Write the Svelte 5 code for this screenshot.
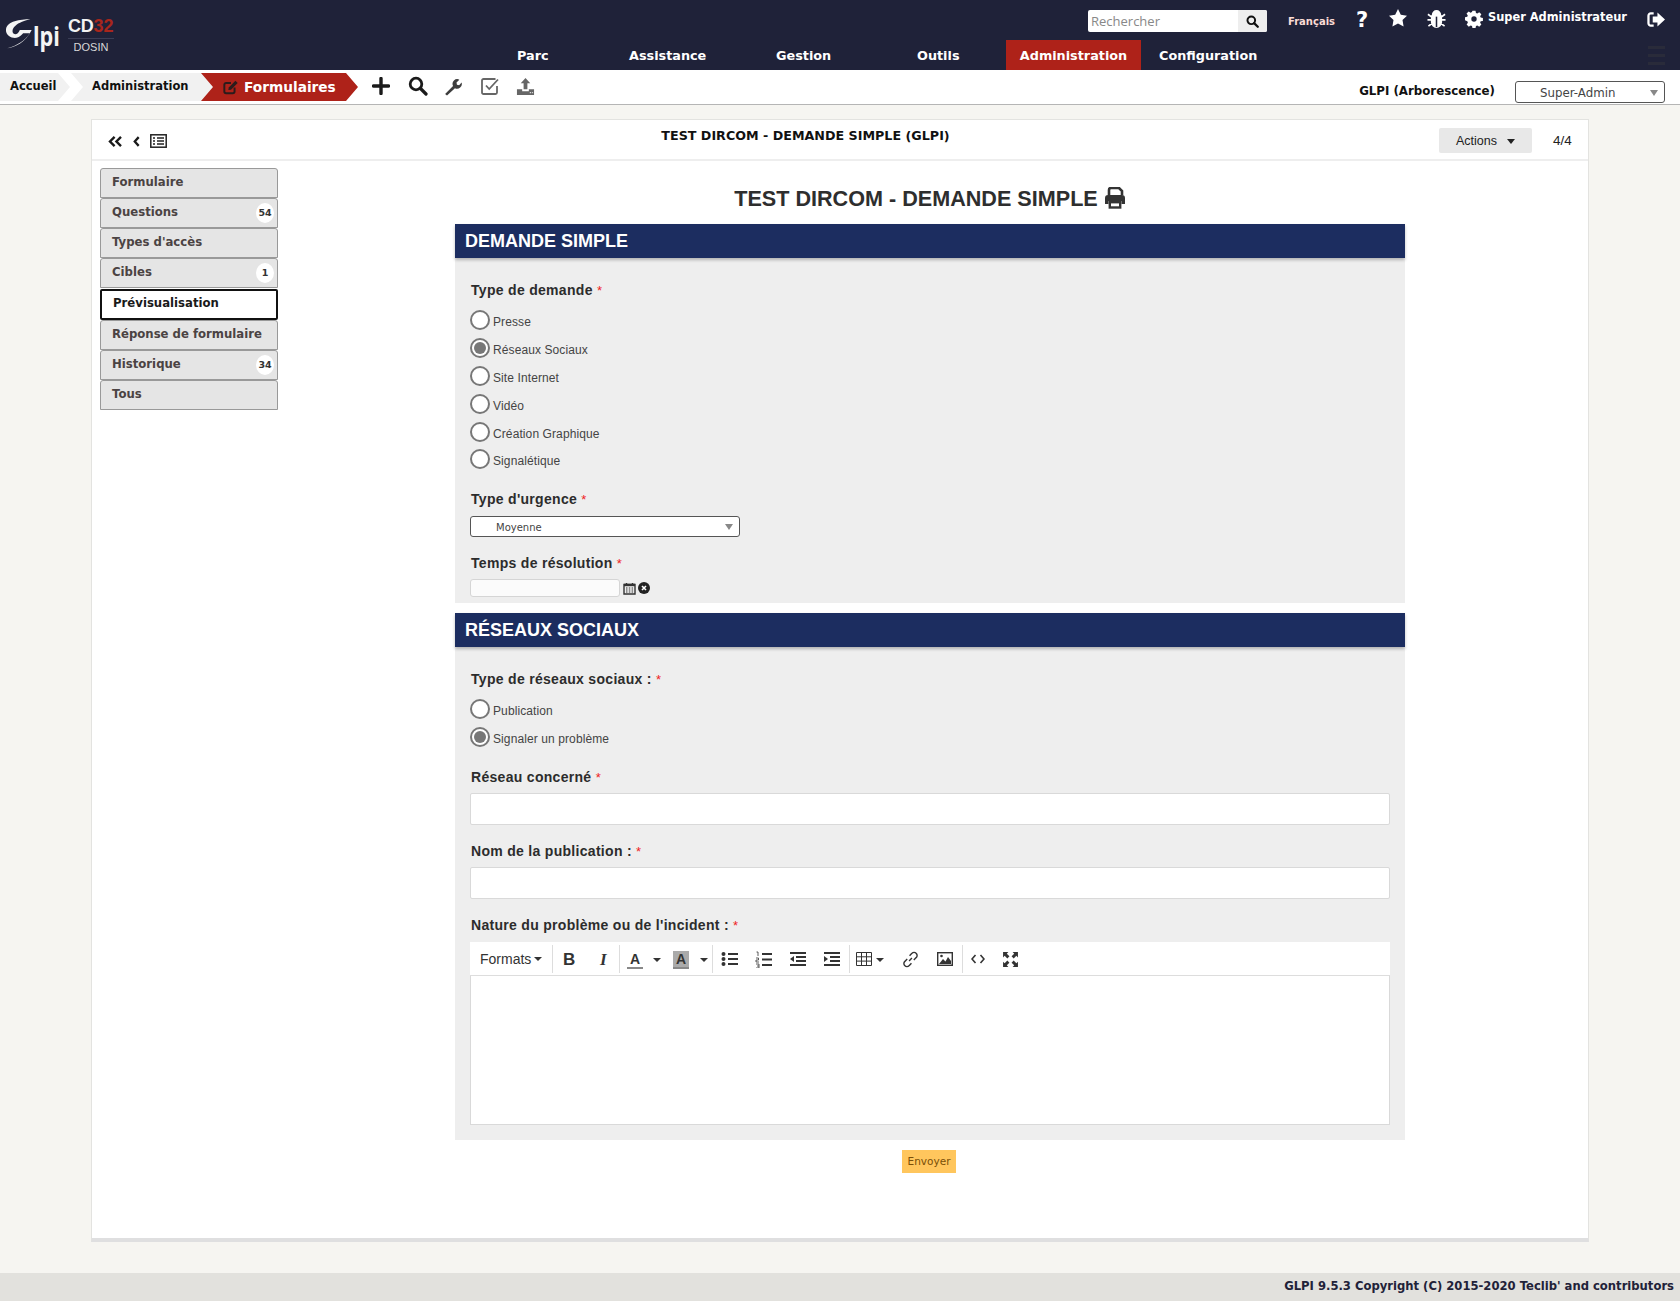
<script>
  const nav = [
    { label: 'Parc', w: 135 },
    { label: 'Assistance', w: 135 },
    { label: 'Gestion', w: 135 },
    { label: 'Outils', w: 135 },
    { label: 'Administration', w: 135, active: true },
    { label: 'Configuration', w: 135 }
  ];
  const tabs = [
    { label: 'Formulaire' },
    { label: 'Questions', badge: 54 },
    { label: "Types d'accès" },
    { label: 'Cibles', badge: 1 },
    { label: 'Prévisualisation', active: true },
    { label: 'Réponse de formulaire' },
    { label: 'Historique', badge: 34 },
    { label: 'Tous' }
  ];
  const demandes = [
    ['Presse', false], ['Réseaux Sociaux', true], ['Site Internet', false],
    ['Vidéo', false], ['Création Graphique', false], ['Signalétique', false]
  ];
  const reseaux = [['Publication', false], ['Signaler un problème', true]];
</script>

<div class="page">
  <header class="top">
    <div class="logo">
      <svg class="swoosh" viewBox="15 35 85 100" width="28" height="33">
        <path d="M92 42C60 42 22 48 18 72c-2 20 18 28 32 26 10-2 16-10 20-14h20C78 105 50 122 22 130c23-4 56-18 74-56H60c-4 10-12 16-18 12-6-4-6-16 4-24 10-10 30-16 46-20z" fill="#f4f4f4"/>
      </svg>
      <span class="lpi">lpi</span>
      <div class="cd">
        <div class="cd32">CD<b>32</b></div>
        <div class="dosin">DOSIN</div>
      </div>
    </div>
    <div class="top-main">
      <div class="top-right">
        <div class="search">
          <span class="search-input">Rechercher</span>
          <span class="search-btn">
            <svg viewBox="0 0 16 16" width="13" height="13"><circle cx="6.500" cy="6.500" r="4.700" fill="none" stroke="#111" stroke-width="2.400"/><path d="M10 10l4.500 4.500" stroke="#111" stroke-width="2.800" stroke-linecap="round"/></svg>
          </span>
        </div>
        <span class="lang">Français</span>
        <span class="qm">?</span>
        <svg class="ti star" viewBox="0 0 20 20" width="20" height="20"><path d="M10 1l2.800 5.800 6.200.9-4.500 4.400 1.100 6.400L10 15.500l-5.600 3 1.100-6.400L1 7.700l6.200-.9z" fill="#fff"/></svg>
        <svg class="ti bug" viewBox="0 0 20 20" width="19" height="19"><path d="M6 5a4 4 0 0 1 8 0zM5 6.500h10V13a5 5 0 0 1-10 0zM1 4.500l4 3M19 4.500l-4 3M.5 10.500h4.500M19.500 10.500H15M1.500 17l4-3M18.500 17l-4-3" fill="#fff" stroke="#fff" stroke-width="1.800"/><path d="M10 7v11" stroke="#1f2239" stroke-width="1.600"/></svg>
        <svg class="ti gear" viewBox="0 0 20 20" width="18" height="18"><path d="M8.300 1h3.400l.5 2.500 1.500.6 2.100-1.400 2.400 2.400-1.400 2.100.6 1.500 2.500.5v3.400l-2.500.5-.6 1.500 1.400 2.100-2.400 2.400-2.100-1.400-1.500.6-.5 2.500H8.300l-.5-2.500-1.500-.6-2.100 1.400-2.400-2.400 1.400-2.100-.6-1.500L0 11.700V8.300l2.500-.5.600-1.500L1.700 4.200l2.400-2.400 2.100 1.400 1.500-.6z" transform="translate(0 -.2) scale(1 .98)" fill="#fff"/><circle cx="10" cy="10" r="3" fill="#1f2239"/></svg>
        <span class="user">Super Administrateur</span>
        <svg class="ti out" viewBox="0 0 20 18" width="19" height="17"><path d="M7 2.500H4A2.500 2.500 0 0 0 1.500 5v8A2.500 2.500 0 0 0 4 15.500h3" fill="none" stroke="#fff" stroke-width="2.400"/><path d="M11 1.500l8 7.500-8 7.500v-4.200H6V5.700h5z" fill="#fff"/></svg>
      </div>
      <nav class="nav">
        {#each nav as n}
          <span class="nav-item" class:active={n.active}>{n.label}</span>
        {/each}
      </nav>
      <div class="burger"><i></i><i></i><i></i></div>
    </div>
  </header>

  <div class="crumbs">
    <div class="crumb first">Accueil</div>
    <div class="crumb second">Administration</div>
    <div class="crumb current">
      <svg viewBox="0 0 18 18" width="16" height="16"><path d="M13 9.500V14a2 2 0 0 1-2 2H3.500a2 2 0 0 1-2-2V6.500a2 2 0 0 1 2-2H9" fill="none" stroke="#2b1c1c" stroke-width="2.200"/><path d="M6.500 9.500L14 2l2.500 2.500L9 12l-3 .5z" fill="#2b1c1c"/></svg>
      <span>Formulaires</span>
    </div>
    <div class="tools">
      <svg viewBox="0 0 18 18" width="18" height="18"><path d="M9 1.500v15M1.500 9h15" stroke="#1a1a1a" stroke-width="3.400" stroke-linecap="round"/></svg>
      <svg viewBox="0 0 20 20" width="20" height="20"><circle cx="8" cy="8" r="5.800" fill="none" stroke="#1a1a1a" stroke-width="2.800"/><path d="M12.500 12.500l5.500 5.500" stroke="#1a1a1a" stroke-width="3.200" stroke-linecap="round"/></svg>
      <svg viewBox="0 0 18 18" width="19" height="19"><path d="M2 16l7.500-7.500a4.500 4.500 0 0 1 6-6L12.800 5.300l.4 2.100 2.100.4 2.300-2.600a4.500 4.500 0 0 1-6.300 5.400L3.800 17.500z" fill="#3d3d3d"/></svg>
      <svg viewBox="0 0 20 20" width="20" height="20"><path d="M17 10v6.500a1.500 1.500 0 0 1-1.500 1.500h-12A1.500 1.500 0 0 1 2 16.500v-12A1.500 1.500 0 0 1 3.500 3h12" fill="none" stroke="#666" stroke-width="1.800"/><path d="M6 9.500l3.200 3.500L18 3.500" fill="none" stroke="#666" stroke-width="1.800"/></svg>
      <svg viewBox="0 0 20 20" width="19" height="19"><path d="M10 1l5 5.500h-3V13H8V6.500H5zM1 13h5.500v2h7v-2H19v6H1z" fill="#666"/><path d="M14.500 16.500h1.500M17 16.500h1" stroke="#fff" stroke-width="1"/></svg>
    </div>
    <div class="profile">
      <span class="ent">GLPI (Arborescence)</span>
      <div class="pselect">Super-Admin<i class="caret"></i></div>
    </div>
  </div>

  <main class="box-wrap">
    <section class="box">
      <div class="box-head">
        <div class="pager-left">
          <svg viewBox="0 0 16 12" width="15" height="11"><path d="M7 1L2 6l5 5M14 1L9 6l5 5" fill="none" stroke="#1a1a1a" stroke-width="2.600"/></svg>
          <svg viewBox="0 0 8 12" width="7" height="11"><path d="M6.500 1L2 6l4.500 5" fill="none" stroke="#1a1a1a" stroke-width="2.600"/></svg>
          <svg viewBox="0 0 17 14" width="17" height="14"><rect x=".8" y=".8" width="15.400" height="12.400" fill="#fff" stroke="#222" stroke-width="1.500"/><path d="M3 4h2M7 4h7M3 7h2M7 7h7M3 10h2M7 10h7" stroke="#222" stroke-width="1.500"/></svg>
        </div>
        <div class="box-title">TEST DIRCOM - DEMANDE SIMPLE (GLPI)</div>
        <div class="actions">Actions<i></i></div>
        <div class="count">4/4</div>
      </div>
      <div class="box-body">
        <ul class="tabs">
          {#each tabs as t}
            <li class:active={t.active}>
              {t.label}
              {#if t.badge}<span class="badge">{t.badge}</span>{/if}
            </li>
          {/each}
        </ul>
        <div class="form">
          <h1>TEST DIRCOM - DEMANDE SIMPLE
            <svg viewBox="0 0 22 22" width="22" height="22"><path d="M5 8V3a2 2 0 0 1 2-2h8l3 3v4" fill="none" stroke="#333" stroke-width="2.600"/><path d="M1 11a3 3 0 0 1 3-3h14a3 3 0 0 1 3 3v6h-3.500v-3h-13v3H1z" fill="#333"/><rect x="5.800" y="15.200" width="10.400" height="5.300" fill="none" stroke="#333" stroke-width="2.400"/></svg>
          </h1>

          <h2 class="section">DEMANDE SIMPLE</h2>
          <div class="sec-body one">
            <div class="label first-label">Type de demande <em>*</em></div>
            <div class="radios">
              {#each demandes as [txt, on]}
                <div class="radio"><span class="dot" class:on={on}></span>{txt}</div>
              {/each}
            </div>
            <div class="label urg">Type d'urgence <em>*</em></div>
            <div class="select">Moyenne<i class="caret"></i></div>
            <div class="label tps">Temps de résolution <em>*</em></div>
            <div class="date">
              <span class="date-input"></span>
              <svg viewBox="0 0 13 13" width="13" height="13"><path d="M1 2.500h11V12H1zM3.500 1v2.500M9.500 1v2.500" fill="none" stroke="#333" stroke-width="1.400"/><path d="M1 1.800h11v2.400H1z" fill="#333"/><path d="M3 6h1.500M5.800 6h1.500M8.600 6h1.500M3 8h1.500M5.800 8h1.500M8.600 8h1.500M3 10h1.500M5.800 10h1.500M8.600 10h1.500" stroke="#333"/></svg>
              <svg viewBox="0 0 12 12" width="12" height="12"><circle cx="6" cy="6" r="6" fill="#222"/><path d="M4 4l4 4M8 4l-4 4" stroke="#fff" stroke-width="1.600"/></svg>
            </div>
          </div>

          <h2 class="section second-sec">RÉSEAUX SOCIAUX</h2>
          <div class="sec-body two">
            <div class="label first-label">Type de réseaux sociaux : <em>*</em></div>
            <div class="radios">
              {#each reseaux as [txt, on]}
                <div class="radio"><span class="dot" class:on={on}></span>{txt}</div>
              {/each}
            </div>
            <div class="label l-res">Réseau concerné <em>*</em></div>
            <div class="text-input"></div>
            <div class="label l-nom">Nom de la publication : <em>*</em></div>
            <div class="text-input"></div>
            <div class="label l-nom">Nature du problème ou de l'incident : <em>*</em></div>
            <div class="editor">
              <div class="tb">
                <span class="t-formats">Formats<i class="mini"></i></span>
                <span class="sep s1"></span>
                <span class="t-b">B</span>
                <span class="t-i">I</span>
                <span class="sep s2"></span>
                <span class="t-a">A</span><i class="mini m1"></i>
                <span class="t-a hl">A</span><i class="mini m2"></i>
                <span class="sep s3"></span>
                <svg class="ic ic1" viewBox="0 0 18 16" width="18" height="16"><circle cx="2.500" cy="3" r="2" fill="#333"/><circle cx="2.500" cy="8" r="2" fill="#333"/><circle cx="2.500" cy="13" r="2" fill="#333"/><path d="M7 3h10M7 8h10M7 13h10" stroke="#333" stroke-width="2"/></svg>
                <svg class="ic ic2" viewBox="0 0 18 17" width="18" height="17"><path d="M7 3h10M7 8.500h10M7 14h10" stroke="#333" stroke-width="2"/><path d="M1.500 1h1.500v4M1 7h2.500v2H1v2h3M1 13h3v4H1M2 15h2" fill="none" stroke="#333" stroke-width=".8"/></svg>
                <svg class="ic ic3" viewBox="0 0 18 16" width="18" height="16"><path d="M1 2h16M7 6h10M7 10h10M1 14h16" stroke="#333" stroke-width="2"/><path d="M5 5v6L1 8z" fill="#333"/></svg>
                <svg class="ic ic4" viewBox="0 0 18 16" width="18" height="16"><path d="M1 2h16M7 6h10M7 10h10M1 14h16" stroke="#333" stroke-width="2"/><path d="M1 5v6l4-3z" fill="#333"/></svg>
                <span class="sep s4"></span>
                <svg class="ic ic5" viewBox="0 0 16 14" width="16" height="14"><path d="M.5.500h15v13H.5zM.5 4.800h15M.5 9.100h15M5.500.500v13M10.500.500v13" fill="none" stroke="#333"/></svg><i class="mini m3"></i>
                <svg class="ic ic6" viewBox="0 0 18 18" width="17" height="17"><path d="M7.500 10.500l3-3M8 5l2.500-2.500a3 3 0 0 1 4.500 0 3 3 0 0 1 0 4.500L12.500 9.500M10 13l-2.500 2.500a3 3 0 0 1-4.500 0 3 3 0 0 1 0-4.500L5.500 8.500" fill="none" stroke="#333" stroke-width="1.500"/></svg>
                <svg class="ic ic7" viewBox="0 0 16 14" width="16" height="14"><rect x=".7" y=".7" width="14.600" height="12.600" fill="none" stroke="#333" stroke-width="1.400"/><path d="M2 12l4-5 2.500 2.500L11 5l3 4v3z" fill="#333"/><circle cx="4.500" cy="4" r="1.300" fill="#333"/></svg>
                <span class="sep s5"></span>
                <svg class="ic ic8" viewBox="0 0 14 10" width="14" height="10"><path d="M4.500 1L1 5l3.500 4M9.500 1L13 5l-3.500 4" fill="none" stroke="#333" stroke-width="1.600"/></svg>
                <svg class="ic ic9" viewBox="0 0 16 16" width="17" height="17"><path d="M1 1h5L4.500 2.500 7 5 5 7 2.500 4.500 1 6zM15 1v5l-1.500-1.500L11 7 9 5l2.500-2.500L10 1zM1 15v-5l1.500 1.500L5 9l2 2-2.500 2.500L6 15zM15 15h-5l1.500-1.500L9 11l2-2 2.500 2.500L15 10z" fill="#333"/></svg>
              </div>
              <div class="area"></div>
            </div>
          </div>
          <div class="send"><span>Envoyer</span></div>
        </div>
      </div>
    </section>
  </main>

  <footer class="foot">GLPI 9.5.3 Copyright (C) 2015-2020 Teclib' and contributors</footer>
</div>

<style>
  :global(body) { margin: 0; background: #f6f5f1; }
  * { box-sizing: border-box; }
  .page { width: 1680px; height: 1301px; font-family: "DejaVu Sans", Verdana, sans-serif; display: flex; flex-direction: column; color: #111; overflow: hidden; }

  .top { height: 70px; background: #1f2239; display: flex; position: relative; }
  .logo { width: 470px; display: flex; align-items: flex-start; padding: 13px 0 0 5px; position: relative; }
  .swoosh { flex: none; margin-top: 4px; }
  .lpi { font: 700 27px/1 "Open Sans", sans-serif; color: #f4f4f4; margin: 9px 0 0 0; transform: scaleX(.8); transform-origin: left; width: 27px; }
  .cd { margin: 2px 0 0 8px; width: 46px; text-align: center; }
  .cd32 { font: 700 18px/22px "Liberation Sans", sans-serif; color: #f2f2f2; border-bottom: 1px solid #3a3d55; padding-bottom: 1px; text-align: left; letter-spacing: -.2px; }
  .cd32 b { color: #a9261c; }
  .dosin { font: 400 11px/14px "Liberation Sans", sans-serif; color: #d8d8d8; margin-top: 1px; }

  .top-main { flex: 1; position: relative; }
  .top-right { position: absolute; top: 10px; right: 14px; display: flex; align-items: flex-start; }
  .search { width: 179px; height: 22px; background: #fff; border-radius: 2px; display: flex; }
  .search-input { flex: 1; font: 13px/22px "Open Sans", sans-serif; color: #888; padding-left: 3px; }
  .search-btn { width: 29px; background: #eee; display: flex; align-items: center; justify-content: center; border-radius: 0 2px 2px 0; }
  .lang { font-size: 10px; font-weight: 700; color: #fbdcd5; margin: 6px 0 0 21px; width: 68px; }
  .qm { font: 700 21px/20px "DejaVu Sans", sans-serif; color: #fff; width: 21px; }
  .ti { flex: none; }
  .star { margin-left: 11px; margin-top: -2px; }
  .bug { margin-left: 19px; }
  .gear { margin-left: 19px; }
  .user { font-size: 11.400px; font-weight: 700; color: #fff; margin: 0 0 0 5px; line-height: 14px; width: 148px; white-space: nowrap; }
  .out { margin-left: 11px; margin-top: 1px; }

  .nav { position: absolute; left: 0; top: 40px; height: 30px; display: flex; }
  .nav-item { font-size: 12.800px; font-weight: 700; color: #fff; line-height: 31px; white-space: nowrap; position: absolute; top: 0; }
  .nav-item:nth-child(1) { left: 47px; }
  .nav-item:nth-child(2) { left: 159px; }
  .nav-item:nth-child(3) { left: 306px; }
  .nav-item:nth-child(4) { left: 447px; }
  .nav-item:nth-child(5) { left: 536px; width: 135px; background: #ae2219; text-align: center; height: 30px; }
  .nav-item:nth-child(6) { left: 689px; }
  .burger { position: absolute; right: 15px; top: 46px; display: flex; flex-direction: column; gap: 5px; }
  .burger i { display: block; width: 17px; height: 3px; background: #292b3a; }

  .crumbs { height: 35px; background: #fff; border-bottom: 1px solid #b5b5b5; position: relative; display: flex; flex: none; }
  .crumb { position: absolute; top: 3px; height: 28px; font-size: 11.500px; font-weight: 700; line-height: 27px; white-space: nowrap; }
  .first { left: 0; background: #f1f1f1; padding-left: 10px; clip-path: polygon(0 0, 58px 0, 70px 50%, 58px 100%, 0 100%); width: 70px; }
  .second { left: 71px; width: 143px; background: #f1f1f1; padding-left: 21px; clip-path: polygon(0 0, 131px 0, 143px 50%, 131px 100%, 0 100%, 12px 50%); }
  .current { left: 201px; width: 157px; background: #ae2219; color: #fff; padding-left: 22px; font-size: 13.700px; display: flex; align-items: center; gap: 5px; clip-path: polygon(0 0, 145px 0, 157px 50%, 145px 100%, 0 100%, 12px 50%); }
  .tools { position: absolute; left: 372px; top: 6px; display: flex; align-items: center; }
  .tools svg:nth-child(2) { margin-left: 18px; }
  .tools svg:nth-child(3) { margin-left: 15px; }
  .tools svg:nth-child(4) { margin-left: 18px; }
  .tools svg:nth-child(5) { margin-left: 16px; }
  .profile { position: absolute; right: 15px; top: 11px; display: flex; }
  .ent { font-size: 11.800px; font-weight: 700; line-height: 17px; margin-right: 20px; margin-top: 2px; }
  .pselect { width: 150px; height: 22px; border: 1px solid #555; border-radius: 3px; background: #fff; font-size: 11.800px; line-height: 22px; color: #444; padding-left: 24px; position: relative; }
  .caret { position: absolute; right: 6px; top: 8px; width: 0; height: 0; border: 4px solid transparent; border-top: 6px solid #888; border-bottom: 0; }

  .box-wrap { flex: 1; padding: 14px 91px 0 91px; min-height: 0; }
  .box { width: 1498px; height: 1123px; background: #fff; border: 1px solid #e3e3e0; border-bottom: 4px solid #dfdfe0; display: flex; flex-direction: column; }
  .box-head { height: 41px; border-bottom: 2px solid #eee; position: relative; flex: none; }
  .pager-left { position: absolute; left: 16px; top: 14px; display: flex; align-items: center; gap: 10px; }
  .box-title { position: absolute; left: 0; width: 1427px; text-align: center; top: 8px; font-size: 12.700px; font-weight: 700; line-height: 16px; }
  .actions { position: absolute; left: 1347px; top: 8px; width: 93px; height: 25px; background: #e8e8e8; border-radius: 2px; font: 12.500px/26px "Liberation Sans", sans-serif; color: #222; padding-left: 17px; }
  .actions i { position: absolute; right: 17px; top: 11px; border: 4px solid transparent; border-top: 5px solid #222; border-bottom: 0; }
  .count { position: absolute; left: 1461px; top: 13px; font: 13.500px/15px "Liberation Sans", sans-serif; color: #222; }

  .box-body { display: flex; flex: 1; padding: 7px 0 0 8px; position: relative; }
  .tabs { list-style: none; margin: 0; padding: 0; width: 178px; flex: none; }
  .tabs li { height: 30px; background: #e5e5e5; border: 1px solid #999; border-radius: 3px 3px 0 0; font-size: 11.700px; font-weight: 700; color: #4b4343; line-height: 26px; padding-left: 11px; position: relative; }
  .tabs li.active { background: #fff; border: 2px solid #111; border-radius: 2px; height: 31px; color: #1a1a1a; line-height: 25px; padding-left: 11px; margin: 1px 0 0; }
  .badge { position: absolute; right: 3px; top: 4px; width: 18px; height: 20px; background: #fff; border-radius: 50%; font-size: 9.500px; line-height: 20px; text-align: center; color: #333; }

  .form { position: absolute; left: 363px; top: 0; width: 950px; }
  h1 { font: 700 21.600px/30px "Liberation Sans", sans-serif; color: #2e2e2e; margin: 23px 0 0; height: 40px; text-align: center; }
  h1 svg { vertical-align: -3px; margin-left: 0; }
  .section { margin: 0; height: 34px; background: #1c2d60; color: #fff; font: 700 18px/34px "Liberation Sans", sans-serif; padding-left: 10px; box-shadow: 0 2px 3px rgba(0,0,0,.25); position: relative; }
  .second-sec { margin-top: 10px; }
  .sec-body { background: #eee; padding: 0 15px 0 15px; }
  .one { height: 345px; }
  .two { height: 493px; }
  .label { font: 700 14px/18px "Liberation Sans", sans-serif; letter-spacing: .3px; color: #2c2c2c; padding-left: 1px; }
  .label em { font-style: normal; color: #e22; font-weight: 400; font-size: 13px; }
  .first-label { padding-top: 23px; box-sizing: content-box; height: 18px; }
  .radios { margin-top: 11px; display: flex; flex-direction: column; gap: 7.900px; }
  .radio { display: flex; align-items: flex-start; height: 20px; font: 12px/24px "Liberation Sans", sans-serif; color: #444; letter-spacing: .1px; }
  .dot { width: 20px; height: 20px; border: 2px solid #777; border-radius: 50%; background: #fff; margin-right: 3px; position: relative; flex: none; }
  .dot.on::after { content: ""; position: absolute; inset: 2px; background: #777; border-radius: 50%; }
  .urg { margin-top: 21px; }
  .select { margin-top: 7px; width: 270px; height: 21px; border: 1px solid #555; border-radius: 3px; background: #fff; font-size: 10px; line-height: 22px; color: #444; padding-left: 25px; position: relative; }
  .select .caret { right: 6px; top: 7px; border-width: 4px; border-top-width: 6px; }
  .tps { margin-top: 17px; }
  .date { margin-top: 6px; display: flex; align-items: center; gap: 2px; }
  .date-input { width: 150px; height: 18px; background: #fbfbfb; border: 1px solid #d5d5d5; border-radius: 3px; margin-right: 1px; }
  .l-res { margin-top: 21px; }
  .text-input { margin-top: 6px; width: 920px; height: 32px; background: #fff; border: 1px solid #d9d9d9; border-radius: 2px; }
  .l-nom { margin-top: 17px; }
  .editor { margin-top: 7px; width: 920px; }
  .tb { height: 34px; background: #fff; position: relative; border-bottom: 1px solid #ddd; font-family: "Liberation Sans", sans-serif; color: #333; }
  .tb > * { position: absolute; }
  .t-formats { left: 10px; top: 9px; font-size: 14px; line-height: 16px; }
  .mini { width: 0; height: 0; border: 4px solid transparent; border-top: 4px solid #333; border-bottom: 0; }
  .t-formats .mini { display: inline-block; margin-left: 3px; vertical-align: 3px; }
  .sep { top: 3px; width: 1px; height: 28px; background: #ddd; }
  .s1 { left: 82px; } .s2 { left: 149px; } .s3 { left: 242px; } .s4 { left: 379px; } .s5 { left: 492px; }
  .t-b { left: 93px; top: 8px; font: 700 17px/19px "Liberation Sans", sans-serif; }
  .t-i { left: 130px; top: 8px; font: italic 700 17px/19px "Liberation Serif", serif; }
  .t-a { top: 9px; width: 16px; text-align: center; font: 700 14px/16px "Liberation Sans", sans-serif; border-bottom: 2px solid #888; }
  .t-a { left: 157px; }
  .t-a.hl { left: 203px; background: #aaa; }
  .m1 { left: 183px; top: 16px; } .m2 { left: 230px; top: 16px; } .m3 { left: 406px; top: 16px; }
  .ic1 { left: 251px; top: 9px; } .ic2 { left: 285px; top: 9px; } .ic3 { left: 319px; top: 9px; } .ic4 { left: 353px; top: 9px; }
  .ic5 { left: 386px; top: 10px; } .ic6 { left: 432px; top: 9px; } .ic7 { left: 467px; top: 10px; } .ic8 { left: 501px; top: 12px; } .ic9 { left: 532px; top: 9px; }
  .area { height: 149px; background: #fff; border: 1px solid #d9d9d9; border-top: 0; }
  .send { text-align: center; margin-top: 10px; padding-right: 2px; }
  .send span { display: inline-block; width: 54px; height: 23px; background: #ffc65d; color: #7a4f08; font-size: 10.500px; line-height: 22px; }

  .foot { height: 28px; background: #e2e1dd; text-align: right; padding-right: 6px; font-size: 11.600px; font-weight: 700; color: #1f2239; line-height: 27px; flex: none; white-space: nowrap; }
</style>
